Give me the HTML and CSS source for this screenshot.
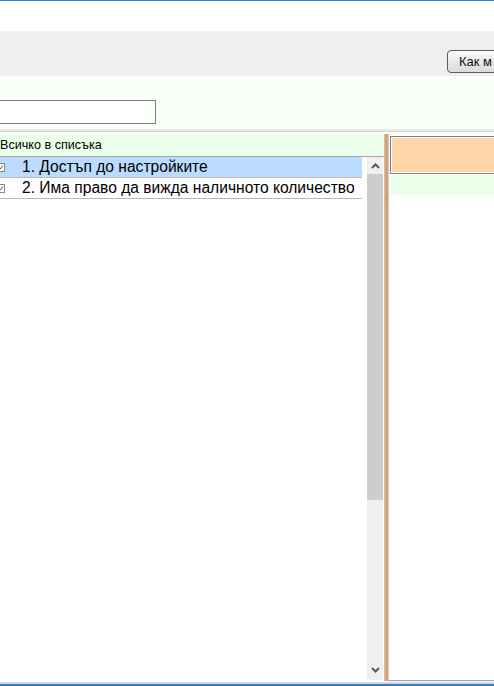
FILE: index.html
```html
<!DOCTYPE html>
<html lang="bg">
<head>
<meta charset="utf-8">
<title>Права</title>
<link rel="stylesheet" href="styles.css">
</head>
<body>
<div class="app">
  <div class="accent-top"></div>
  <div class="titlebar"></div>
  <div class="toolbar">
    <button class="btn">Как м</button>
  </div>
  <div class="filter">
    <input class="search" type="text">
  </div>
  <div class="sep"></div>
  <div class="main">
    <div class="left">
      <div class="list-head">Всичко в списъка</div>
      <div class="list-body">
        <div class="rows">
          <div class="row selected">
            <svg class="chk" width="9" height="9" viewBox="0 0 9 9"><rect x="0.5" y="0.5" width="8" height="8" fill="#fff" stroke="#8a8a8a"/><path d="M2 4.6 L3.8 6.4 L7 2.6" fill="none" stroke="#555" stroke-width="1"/></svg>
            <span class="label">1. Достъп до настройките</span>
          </div>
          <div class="row">
            <svg class="chk" width="9" height="9" viewBox="0 0 9 9"><rect x="0.5" y="0.5" width="8" height="8" fill="#fff" stroke="#8a8a8a"/><path d="M2 4.6 L3.8 6.4 L7 2.6" fill="none" stroke="#555" stroke-width="1"/></svg>
            <span class="label">2. Има право да вижда наличното количество</span>
          </div>
        </div>
        <div class="vscroll">
          <div class="arrow up"><svg width="9" height="6" viewBox="0 0 9 6"><path d="M1 5 L4.5 1.5 L8 5" fill="none" stroke="#5a5a5a" stroke-width="2"/></svg></div>
          <div class="thumb"></div>
          <div class="track"></div>
          <div class="arrow down"><svg width="9" height="6" viewBox="0 0 9 6"><path d="M1 1 L4.5 4.5 L8 1" fill="none" stroke="#5a5a5a" stroke-width="2"/></svg></div>
        </div>
      </div>
    </div>
    <div class="splitter"></div>
    <div class="right">
      <div class="orange-box"></div>
      <div class="green-band"></div>
    </div>
  </div>
  <div class="accent-bottom"></div>
</div>
</body>
</html>
```

FILE: styles.css
```css
* { box-sizing: border-box; }
html, body {
  margin: 0;
  padding: 0;
  width: 494px;
  height: 686px;
  overflow: hidden;
  background: #fff;
  font-family: "Liberation Sans", Arial, sans-serif;
}
.app {
  display: flex;
  flex-direction: column;
  height: 686px;
  width: 494px;
  overflow: hidden;
}
.accent-top { height: 1px; background: #1a84d6; flex: none; }
.titlebar { height: 30px; background: #fff; flex: none; }
.toolbar {
  height: 45px;
  flex: none;
  background: #efefef;
  display: flex;
  justify-content: flex-end;
  align-items: flex-start;
  padding-top: 19px;
}
.btn {
  flex: none;
  width: 80px;
  height: 23px;
  margin-right: -33px;
  padding: 0 0 0 11px;
  text-align: left;
  font-family: "Liberation Sans", Arial, sans-serif;
  font-size: 13px;
  color: #111;
  border: 1px solid #5a5a5a;
  border-radius: 4px;
  background: linear-gradient(#fbfbfb, #e6e6e6 60%, #dcdcdc);
}
.filter {
  height: 53px;
  flex: none;
  background: #f7fff7;
  padding-top: 24px;
}
.search {
  display: block;
  margin: 0 0 0 -20px;
  width: 176px;
  height: 24px;
  border: 1px solid #7a7a7a;
  background: #fff;
  padding: 0;
}
.sep {
  height: 4px;
  flex: none;
  border-top: 2px solid #e8e8e8;
  border-bottom: 1px solid #fff;
  background: #d3d3d3;
}
.main {
  flex: 1;
  display: flex;
  padding-top: 1px;
  min-height: 0;
}
.left {
  width: 384px;
  flex: none;
  display: flex;
  flex-direction: column;
}
.list-head {
  height: 23px;
  background: #ebffeb;
  border-bottom: 1px solid #a8a8a8;
  font-size: 12.6px;
  line-height: 22px;
  color: #000;
  padding-left: 0;
  white-space: nowrap;
}
.list-body {
  display: flex;
  height: 523px;
}
.rows {
  width: 362px;
  flex: none;
}
.row {
  height: 21px;
  border-bottom: 1px solid #b8b8b8;
  display: flex;
  align-items: center;
  white-space: nowrap;
  font-size: 15.6px;
  color: #000;
}
.row.selected { background: #bbdcff; }
.chk {
  flex: none;
  margin-left: -4px;
  display: block;
}
.label {
  margin-left: 17px;
  line-height: 20px;
}
.vscroll {
  width: 16px;
  margin-left: 5px;
  flex: none;
  display: flex;
  flex-direction: column;
  background: #f0f0f0;
}
.arrow {
  height: 17px;
  flex: none;
  display: flex;
  align-items: center;
  justify-content: center;
}
.thumb {
  height: 326px;
  flex: none;
  background: #cdcdcd;
}
.track { flex: 1; }
.arrow.down { height: 20px; align-items: flex-start; padding-top: 7px; }
.splitter {
  width: 5px;
  flex: none;
  background: linear-gradient(90deg, #c0c0c0 0 1px, #f3a35a 1px 2px, #a6a6a6 2px 3px, #f3a35a 3px 4px, #c8c8c8 4px 5px);
  height: 547px;
}
.right {
  flex: 1;
  padding: 2px 0 0 1px;
  height: 547px;
  border-bottom: 1px solid #a0a0a0;
}
.orange-box {
  height: 38px;
  background: #ffd6a8;
  border: 1px solid #7e7e7e;
  box-shadow: inset 0 0 0 1px #fff;
  margin-right: -2px;
}
.green-band {
  height: 20px;
  margin-top: 1px;
  background: #ebffeb;
}
.accent-bottom {
  height: 4px;
  flex: none;
  border-top: 2px solid #d6d6d6;
  background: #2a7fc8;
}
```
